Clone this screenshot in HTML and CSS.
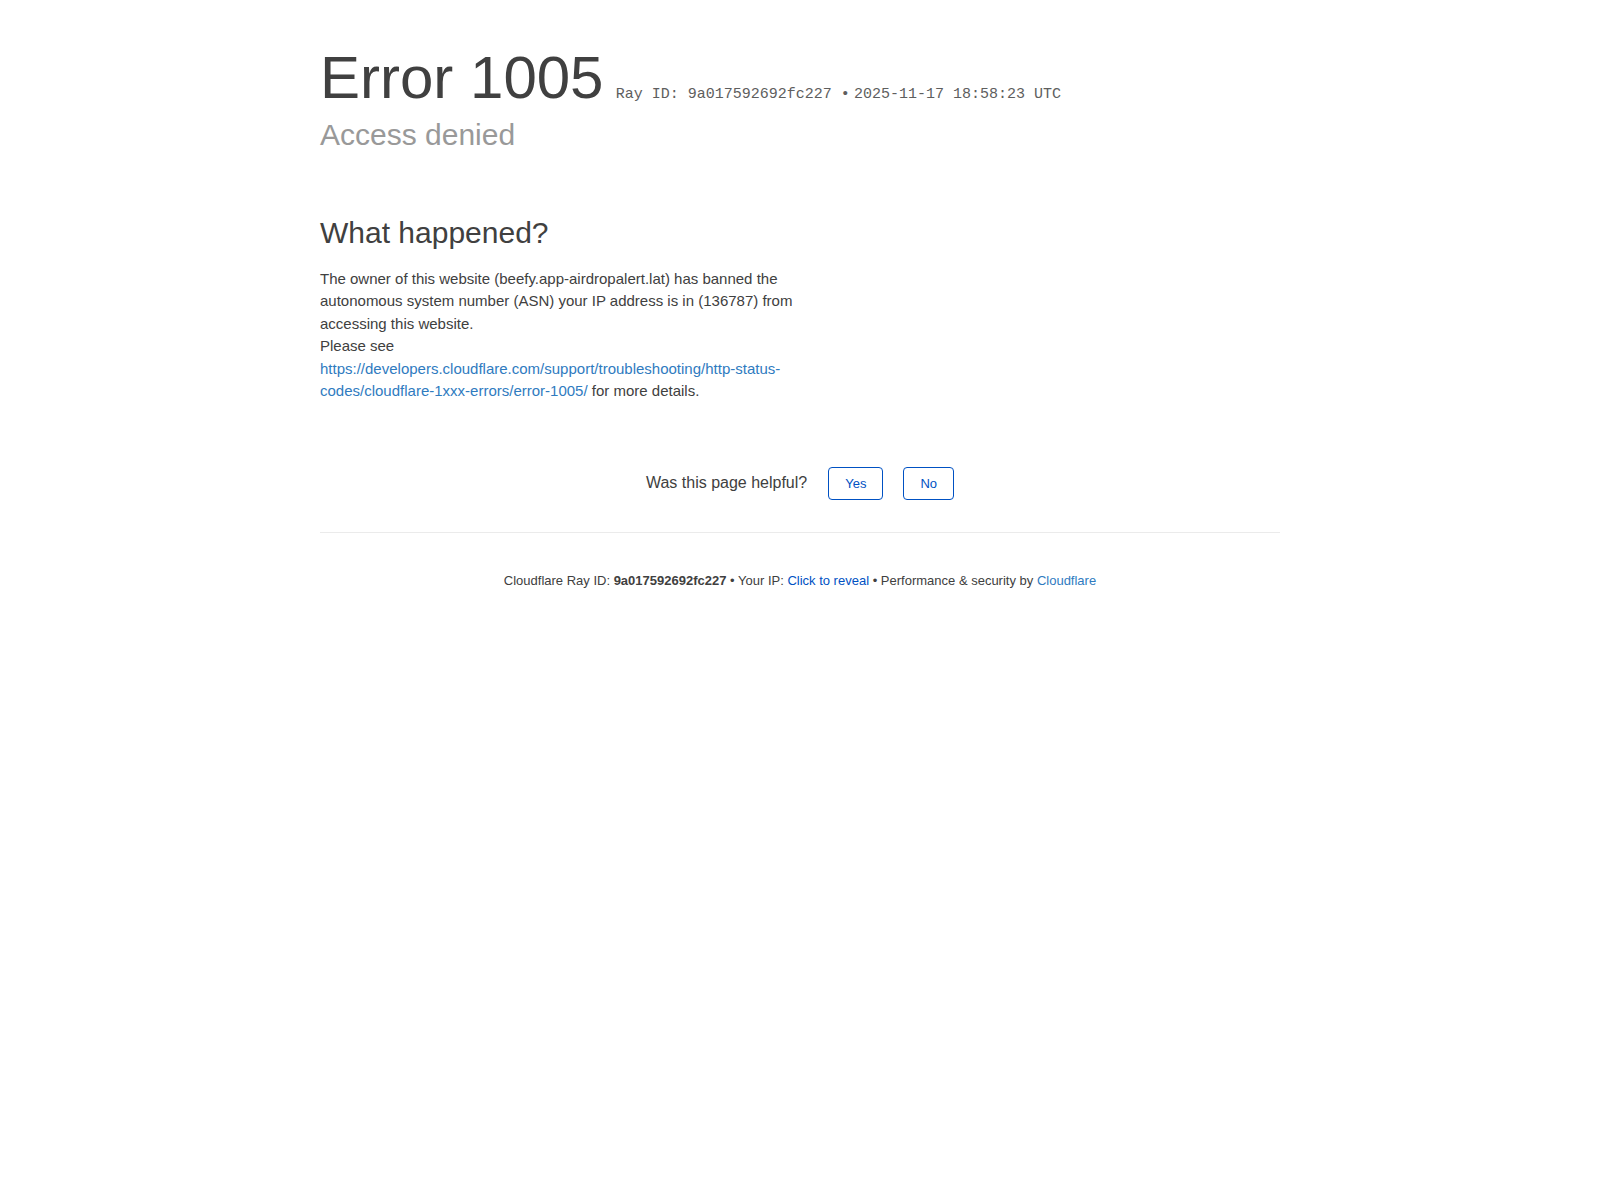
FILE: index.html
```html
<!DOCTYPE html>
<html lang="en-US">
<head>
<meta charset="UTF-8">
<title>Access denied | beefy.app-airdropalert.lat used Cloudflare to restrict access</title>
<link rel="stylesheet" href="styles.css">
</head>
<body>
<div class="cf-wrapper">
  <header class="cf-header">
    <h1 class="cf-title"><span>Error</span> <span>1005</span></h1>
    <span class="ray-id">Ray ID: 9a017592692fc227 &bull;</span>
    <span class="ray-id">2025-11-17 18:58:23 UTC</span>
    <h2 class="cf-subtitle">Access denied</h2>
  </header>

  <section class="cf-section">
    <div class="what-happened">
      <h2 class="section-title">What happened?</h2>
      <p class="section-text">The owner of this website (beefy.app-airdropalert.lat) has banned the autonomous system number (ASN) your IP address is in (136787) from accessing this website.<br>Please see <a class="text-link" href="#">https://developers.cloudflare.com/support/troubleshooting/http-status-codes/cloudflare-1xxx-errors/error-1005/</a> for more details.</p>
    </div>
  </section>

  <div class="feedback">
    <span class="feedback-label">Was this page helpful?</span>
    <button type="button" class="cf-btn">Yes</button>
    <button type="button" class="cf-btn">No</button>
  </div>

  <div class="cf-footer">
    <p class="footer-text">
      <span class="footer-item">Cloudflare Ray ID: <strong class="footer-strong">9a017592692fc227</strong></span>
      <span class="footer-sep">&bull;</span>
      <span class="footer-item">Your IP: <button type="button" class="ip-reveal">Click to reveal</button></span>
      <span class="footer-sep">&bull;</span>
      <span class="footer-item">Performance &amp; security by <a class="brand-link" href="#">Cloudflare</a></span>
    </p>
  </div>
</div>
</body>
</html>
```

FILE: styles.css
```css
* {
  box-sizing: border-box;
}

html, body {
  margin: 0;
  padding: 0;
  background: #ffffff;
}

body {
  font-family: "Liberation Sans", Arial, Helvetica, sans-serif;
  font-size: 15px;
  line-height: 1.5;
  color: #404040;
}

.cf-wrapper {
  width: 960px;
  margin: 0 auto;
}

.cf-header {
  padding-top: 40px;
  margin-bottom: 60px;
}

.cf-title {
  display: inline-block;
  margin: 0 8px 0 0;
  font-size: 60px;
  font-weight: 300;
  line-height: 1.25;
  color: #404040;
}

.ray-id {
  display: inline-block;
  font-family: "Courier New", "Liberation Mono", monospace;
  font-size: 15px;
  color: #5e5e5e;
}

.cf-subtitle {
  margin: 0;
  font-size: 30px;
  font-weight: 300;
  line-height: 1.3;
  color: #999999;
}

.cf-section {
  margin-bottom: 32px;
}

.what-happened {
  width: 480px;
}

.section-title {
  margin: 0 0 16px 0;
  font-size: 30px;
  font-weight: 400;
  line-height: 1.25;
  color: #404040;
}

.section-text {
  margin: 0;
  font-size: 15px;
  line-height: 1.5;
}

.text-link {
  color: #2f7bbf;
  text-decoration: none;
}

.feedback {
  display: flex;
  justify-content: center;
  align-items: center;
  padding: 32px 0;
  font-size: 16px;
}

.feedback-label {
  margin-right: 21px;
  line-height: 1.5;
}

.cf-btn {
  height: 33px;
  margin-right: 20px;
  padding: 0 16px;
  font-family: "Liberation Sans", Arial, Helvetica, sans-serif;
  font-size: 13px;
  color: #0051c3;
  background: #ffffff;
  border: 1px solid #0051c3;
  border-radius: 4px;
  cursor: pointer;
}

.cf-btn:last-child {
  margin-right: 0;
}

.cf-footer {
  padding: 38px 0 40px;
  border-top: 1px solid #ebebeb;
  text-align: center;
}

.footer-text {
  margin: 0;
  font-size: 13px;
  line-height: 1.5;
  color: #404040;
}

.footer-strong {
  font-weight: 600;
}

.ip-reveal {
  padding: 0;
  margin: 0;
  border: 0;
  background: transparent;
  font-family: inherit;
  font-size: 13px;
  color: #0051c3;
  cursor: pointer;
}

.brand-link {
  color: #2f7bbf;
  text-decoration: none;
}
```
